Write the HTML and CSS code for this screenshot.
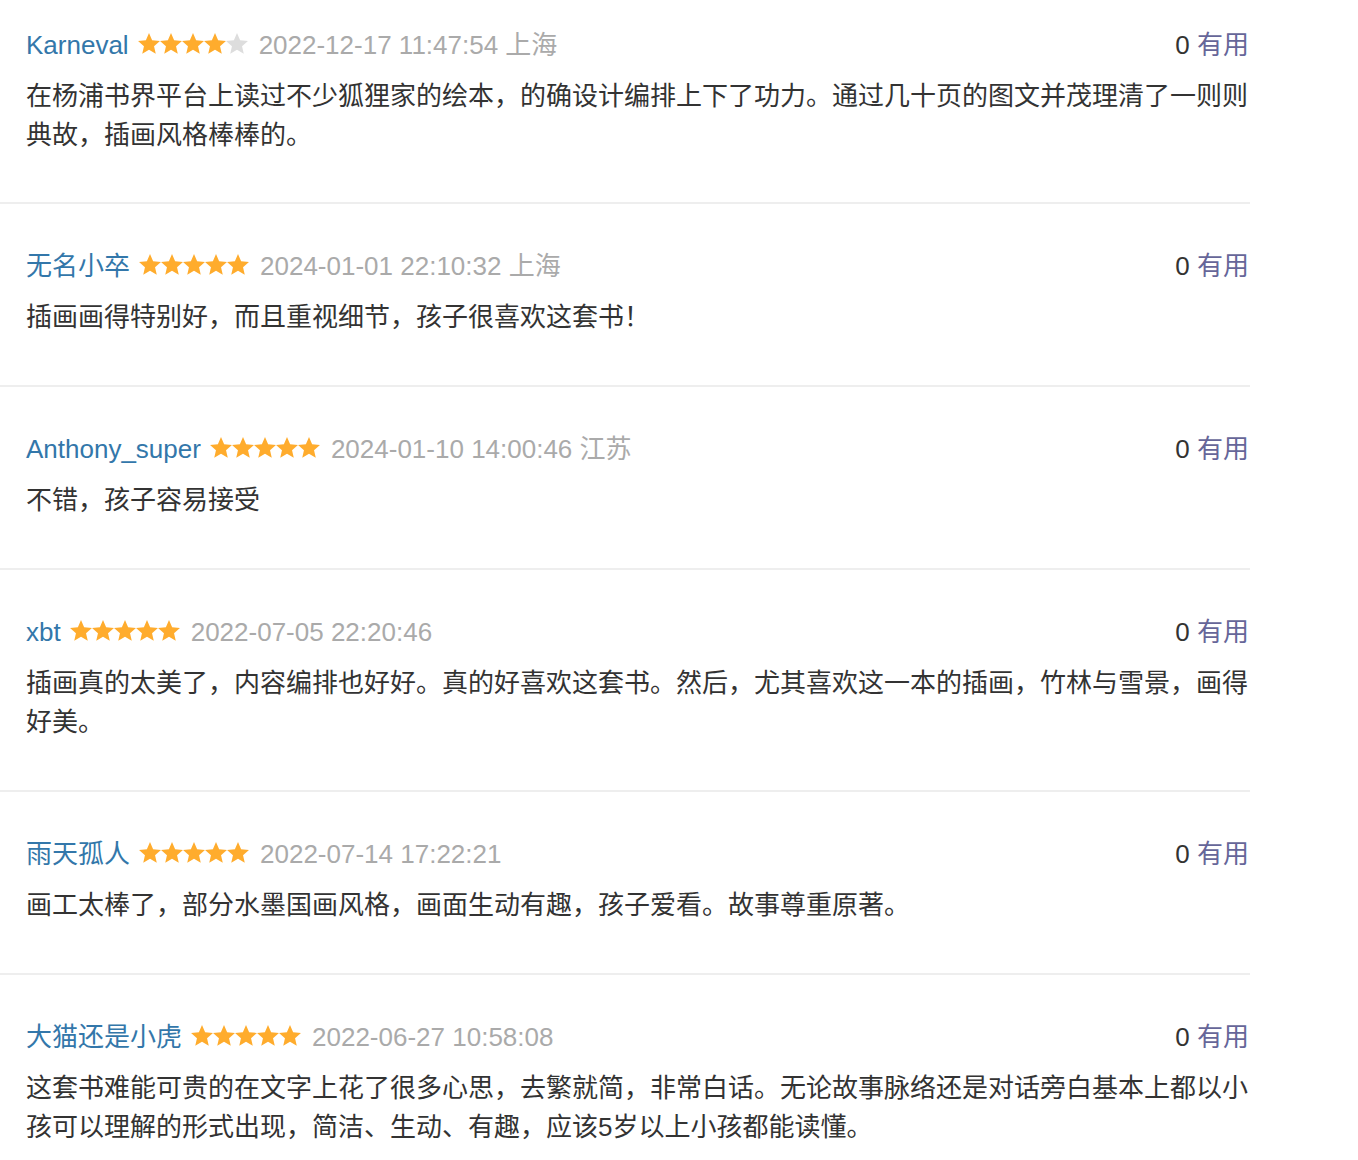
FILE: index.html
```html
<!DOCTYPE html>
<html lang="zh-CN">
<head>
<meta charset="utf-8">
<title>评论</title>
<link rel="stylesheet" href="styles.css">
</head>
<body>
<svg class="defs" width="0" height="0" aria-hidden="true">
  <defs>
    <polygon id="star" points="11,0 14.12,7.21 21.94,7.95 16.04,13.14 17.76,20.8 11,16.8 4.24,20.8 5.96,13.14 0.06,7.95 7.88,7.21"/>
  </defs>
</svg>
<div class="reviews">
  <div class="review">
    <div class="head">
      <div class="info">
        <a class="name">Karneval</a>
        <svg class="stars" width="110" height="22" viewBox="0 0 110 22"><use href="#star" class="on"/><use href="#star" class="on" x="22"/><use href="#star" class="on" x="44"/><use href="#star" class="on" x="66"/><use href="#star" class="off" x="88"/></svg>
        <span class="time">2022-12-17 11:47:54 上海</span>
      </div>
      <div class="vote"><span class="count">0</span> <a class="useful">有用</a></div>
    </div>
    <p class="text">在杨浦书界平台上读过不少狐狸家的绘本，的确设计编排上下了功力。通过几十页的图文并茂理清了一则则典故，插画风格棒棒的。</p>
  </div>
  <div class="review">
    <div class="head">
      <div class="info">
        <a class="name">无名小卒</a>
        <svg class="stars" width="110" height="22" viewBox="0 0 110 22"><use href="#star" class="on"/><use href="#star" class="on" x="22"/><use href="#star" class="on" x="44"/><use href="#star" class="on" x="66"/><use href="#star" class="on" x="88"/></svg>
        <span class="time">2024-01-01 22:10:32 上海</span>
      </div>
      <div class="vote"><span class="count">0</span> <a class="useful">有用</a></div>
    </div>
    <p class="text">插画画得特别好，而且重视细节，孩子很喜欢这套书！</p>
  </div>
  <div class="review">
    <div class="head">
      <div class="info">
        <a class="name">Anthony_super</a>
        <svg class="stars" width="110" height="22" viewBox="0 0 110 22"><use href="#star" class="on"/><use href="#star" class="on" x="22"/><use href="#star" class="on" x="44"/><use href="#star" class="on" x="66"/><use href="#star" class="on" x="88"/></svg>
        <span class="time">2024-01-10 14:00:46 江苏</span>
      </div>
      <div class="vote"><span class="count">0</span> <a class="useful">有用</a></div>
    </div>
    <p class="text">不错，孩子容易接受</p>
  </div>
  <div class="review">
    <div class="head">
      <div class="info">
        <a class="name">xbt</a>
        <svg class="stars" width="110" height="22" viewBox="0 0 110 22"><use href="#star" class="on"/><use href="#star" class="on" x="22"/><use href="#star" class="on" x="44"/><use href="#star" class="on" x="66"/><use href="#star" class="on" x="88"/></svg>
        <span class="time">2022-07-05 22:20:46</span>
      </div>
      <div class="vote"><span class="count">0</span> <a class="useful">有用</a></div>
    </div>
    <p class="text">插画真的太美了，内容编排也好好。真的好喜欢这套书。然后，尤其喜欢这一本的插画，竹林与雪景，画得好美。</p>
  </div>
  <div class="review">
    <div class="head">
      <div class="info">
        <a class="name">雨天孤人</a>
        <svg class="stars" width="110" height="22" viewBox="0 0 110 22"><use href="#star" class="on"/><use href="#star" class="on" x="22"/><use href="#star" class="on" x="44"/><use href="#star" class="on" x="66"/><use href="#star" class="on" x="88"/></svg>
        <span class="time">2022-07-14 17:22:21</span>
      </div>
      <div class="vote"><span class="count">0</span> <a class="useful">有用</a></div>
    </div>
    <p class="text">画工太棒了，部分水墨国画风格，画面生动有趣，孩子爱看。故事尊重原著。</p>
  </div>
  <div class="review">
    <div class="head">
      <div class="info">
        <a class="name">大猫还是小虎</a>
        <svg class="stars" width="110" height="22" viewBox="0 0 110 22"><use href="#star" class="on"/><use href="#star" class="on" x="22"/><use href="#star" class="on" x="44"/><use href="#star" class="on" x="66"/><use href="#star" class="on" x="88"/></svg>
        <span class="time">2022-06-27 10:58:08</span>
      </div>
      <div class="vote"><span class="count">0</span> <a class="useful">有用</a></div>
    </div>
    <p class="text">这套书难能可贵的在文字上花了很多心思，去繁就简，非常白话。无论故事脉络还是对话旁白基本上都以小孩可以理解的形式出现，简洁、生动、有趣，应该5岁以上小孩都能读懂。</p>
  </div>
</div>
</body>
</html>
```

FILE: styles.css
```css
html, body {
  margin: 0;
  padding: 0;
  background: #fff;
}

body {
  font-family: "Liberation Sans", "Noto Sans CJK SC", sans-serif;
  font-size: 26px;
  color: #333;
}

.defs {
  position: absolute;
  width: 0;
  height: 0;
  overflow: hidden;
}

.reviews {
  width: 1250px;
}

.review {
  padding: 43px 1px 48px 26px;
  border-bottom: 2px solid #eeeeee;
}

.review:first-child {
  padding-top: 26px;
  padding-bottom: 47px;
}

.review:last-child {
  border-bottom: none;
}

.head {
  display: flex;
  justify-content: space-between;
  align-items: center;
  line-height: 39px;
  height: 39px;
}

.info {
  display: flex;
  align-items: center;
  white-space: nowrap;
}

.name {
  color: #3377aa;
  text-decoration: none;
}

.stars {
  display: block;
  margin: 0 11px 4px 9px;
}

.stars .on {
  fill: #ffac2d;
}

.stars .off {
  fill: #dddddd;
}

.time {
  color: #aaaaaa;
}

.vote {
  white-space: nowrap;
}

.count {
  color: #333;
}

.useful {
  color: #666699;
  text-decoration: none;
}

.text {
  margin: 12px 0 0 0;
  line-height: 39px;
  color: #333;
}
```
